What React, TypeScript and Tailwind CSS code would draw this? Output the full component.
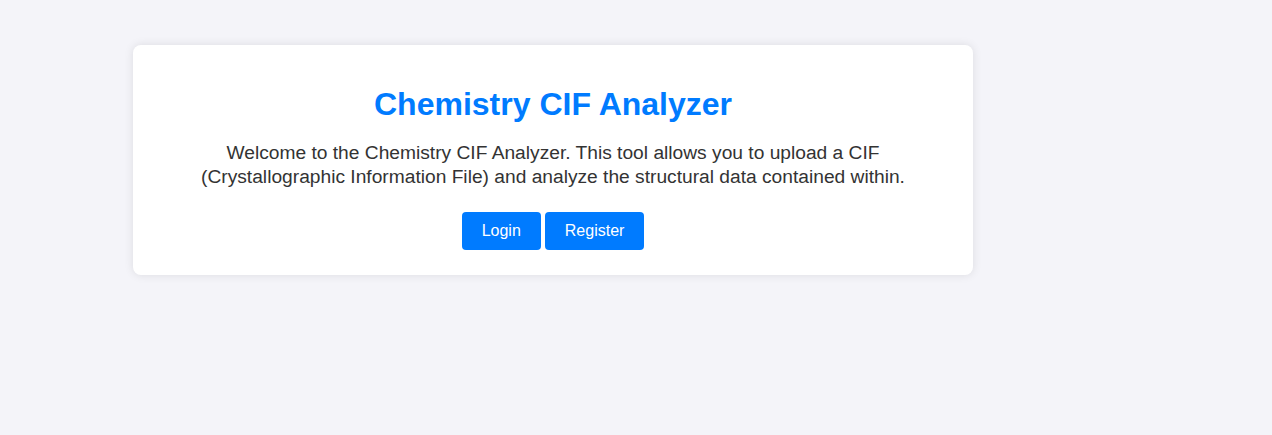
export default function App() {
  return (
    <div className="min-h-[435px] bg-[#f4f4f9] pt-[45px] pl-[133px] font-['Liberation_Sans',Arial,sans-serif]">
      <div className="w-[840px] rounded-lg bg-white p-5 text-center shadow-[0_0_10px_rgba(0,0,0,0.1)]">
        <h1 className="mt-[21px] text-[32px] font-bold leading-[37px] text-[#007bff]">
          Chemistry CIF Analyzer
        </h1>
        <p className="mx-auto mt-[18px] w-[760px] text-[19.2px] leading-6 text-[#333]">
          Welcome to the Chemistry CIF Analyzer. This tool allows you to upload a CIF (Crystallographic
          Information File) and analyze the structural data contained within.
        </p>
        <div className="mt-[23px] flex justify-center gap-1 pb-[5px]">
          <button className="rounded bg-[#007bff] px-5 py-2.5 text-base leading-[18px] text-white">
            Login
          </button>
          <button className="rounded bg-[#007bff] px-5 py-2.5 text-base leading-[18px] text-white">
            Register
          </button>
        </div>
      </div>
    </div>
  );
}
